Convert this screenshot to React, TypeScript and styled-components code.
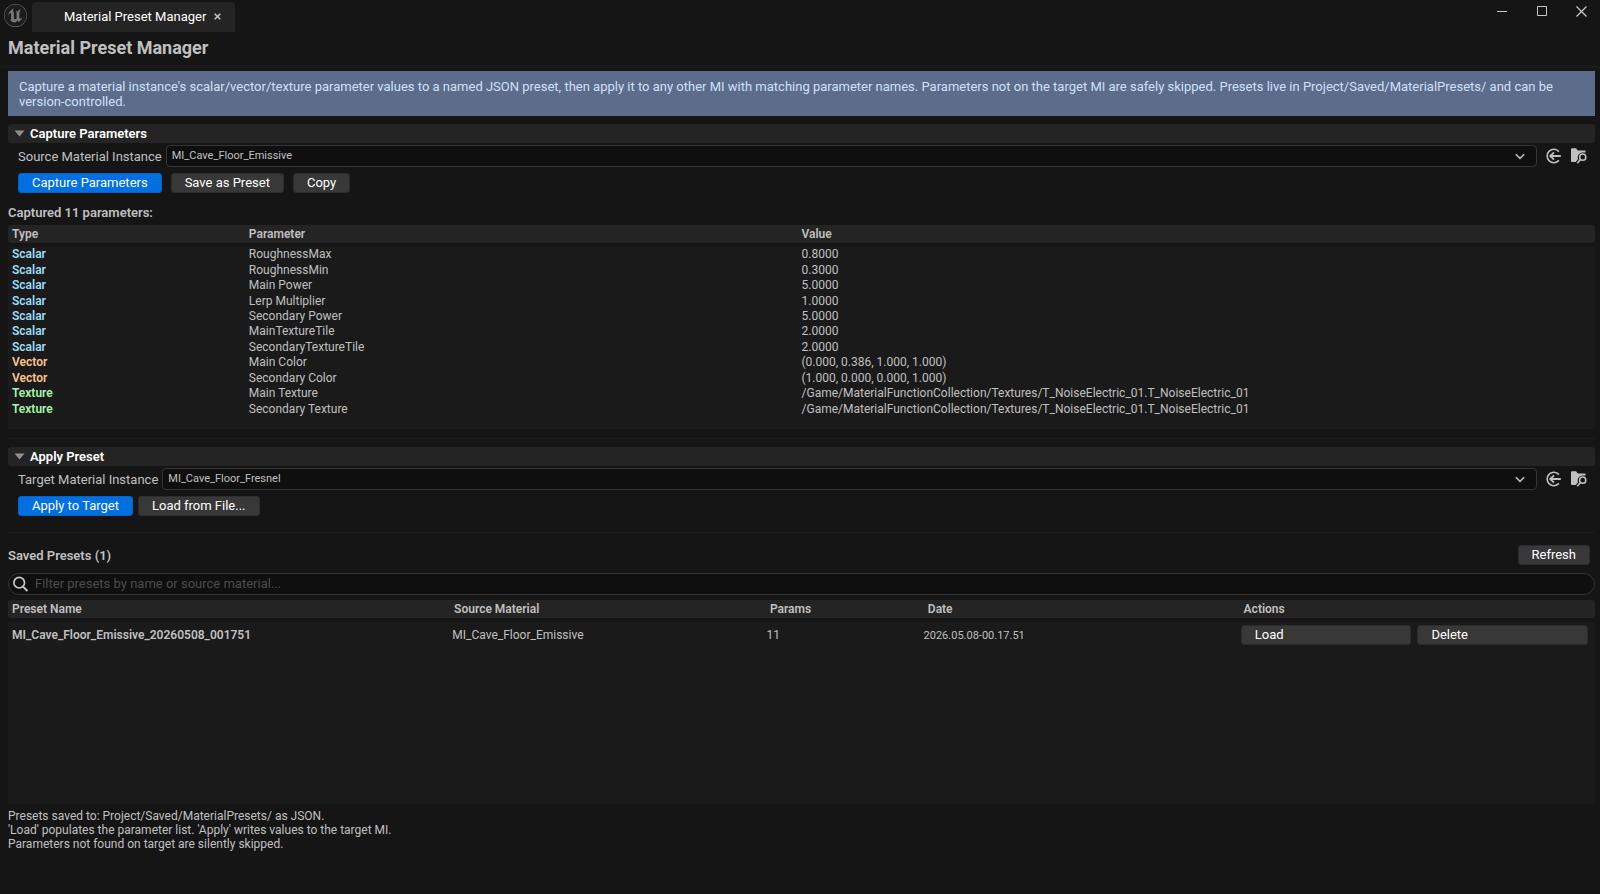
import React from "react";
import styled, { createGlobalStyle } from "styled-components";
import { SiUnrealengine } from "react-icons/si";

const GlobalStyle = createGlobalStyle`
  *, *::before, *::after { box-sizing: border-box; }
  body {
    margin: 0;
    background: #151515;
    color: #c0c0c0;
    font-family: Roboto, "Liberation Sans", sans-serif;
    font-size: 13px;
    line-height: 15px;
  }
  button, input, select { font: inherit; color: inherit; margin: 0; }
`;

const Window = styled.div`
  display: flex;
  flex-direction: column;
  min-height: 100vh;
`;

const TitleBar = styled.header`
  display: flex;
  align-items: flex-start;
  height: 32px;
`;

const Logo = styled.span`
  display: flex;
  margin: 4px 5px 0 4px;
  border-radius: 50%;
  background: #1c1c1c;
  color: #777;
`;

const Tab = styled.div`
  display: flex;
  align-items: center;
  width: 203px;
  height: 30px;
  margin-top: 2px;
  padding: 0 11px 2px 32px;
  border-radius: 4px 4px 0 0;
  background: #242424;
  color: #fff;
`;

const PlainButton = styled.button`
  display: inline-flex;
  align-items: center;
  justify-content: center;
  padding: 0;
  border: 0;
  background: none;
  color: inherit;
  white-space: nowrap;
`;

const TabClose = styled(PlainButton)`
  width: 14px;
  height: 14px;
  margin-left: auto;
  color: #c0c0c0;
`;

const WindowControls = styled.div`
  display: flex;
  margin-left: auto;
`;

const WindowButton = styled(PlainButton)`
  width: 40px;
  height: 22px;
  color: #c8c8c8;

  &:last-child { width: 38px; }
`;

const Main = styled.main`
  display: flex;
  flex-direction: column;
  padding: 0 5px 0 8px;
`;

const Title = styled.h1`
  margin: 0 -5px 0 -8px;
  padding: 4px 8px 5px;
  border-bottom: 3px solid #191919;
  font-size: 18px;
  line-height: 24px;
  font-weight: 700;
`;

const Banner = styled.p`
  margin: 3px 0 8px;
  padding: 8px 11px 7px;
  background: #5b6d8b;
  color: #cfe0fb;
`;

const SectionHeader = styled.h2`
  display: flex;
  margin: 0;
  height: 19px;
  border-radius: 3px;
  background: #242424;
  color: #fff;
  font-size: 13px;
  font-weight: 600;
`;

const SectionToggle = styled(PlainButton)`
  flex: 1;
  justify-content: flex-start;
  gap: 5px;
  padding: 0 0 1px 6px;
`;

const FieldRow = styled.div`
  display: flex;
  align-items: center;
  gap: 4px;
  margin-top: 2px;
  padding: 0 8px 0 10px;
`;

const SelectBox = styled.div`
  display: grid;
  flex: 1;
  align-items: center;

  > * { grid-area: 1 / 1; }
  > svg { justify-self: end; margin-right: 12px; pointer-events: none; }
`;

const Select = styled.select`
  appearance: none;
  width: 100%;
  height: 22px;
  padding: 0 32px 2px 5px;
  border: 1px solid #353535;
  border-radius: 4px;
  background: #0f0f0f;
  color: #c0c0c0;
  font-size: 11px;
`;

const AssetActions = styled.div`
  display: flex;
  gap: 9px;
  margin-left: 5px;
`;

const IconButton = styled(PlainButton)`
  width: 16px;
  height: 16px;
  color: #c0c0c0;
`;

const ButtonRow = styled.div<{ $gap: number }>`
  display: flex;
  gap: ${(p) => p.$gap}px;
  margin-top: 6px;
  padding-left: 10px;
`;

const Button = styled.button<{ $primary?: boolean; $start?: boolean }>`
  height: 20px;
  padding: 0 13px 1px;
  border: 1px solid ${(p) => (p.$primary ? "#0064c8" : "#2c2c2c")};
  border-radius: 3px;
  background: ${(p) => (p.$primary ? "#0070e0" : "#383838")};
  color: #fff;
  line-height: 15px;
  text-align: ${(p) => (p.$start ? "left" : "center")};
  white-space: nowrap;
`;

const ListTitle = styled.h2`
  margin: 0;
  font-size: 13px;
  line-height: 15px;
  font-weight: 600;
`;

const CapturedTitle = styled(ListTitle)`
  margin: 12px 0 5px;
`;

const Table = styled.table`
  display: block;
  font-size: 12px;
  text-align: left;
`;

const Head = styled.thead`
  display: block;
  margin-bottom: 4px;
  border-radius: 3px;
  background: #242424;
`;

const Body = styled.tbody`
  display: block;
  min-height: 182px;
  background: #1a1a1a;
`;

const ParamHeadRow = styled.tr`
  display: grid;
  grid-template-columns: 15fr 35fr 50fr;
  align-items: center;
  height: 18px;
  padding: 0 4px;
`;

const ParamRow = styled(ParamHeadRow)`
  height: auto;
`;

const ParamBody = styled(Body)`
  display: grid;
  align-content: start;
  grid-template-rows: repeat(11, 1fr);
  height: 182px;
  padding-bottom: 12px;
`;

const PresetHeadRow = styled.tr`
  display: grid;
  grid-template-columns: 28fr 20fr 10fr 20fr 22fr;
  align-items: center;
  height: 18px;
  padding: 0 4px;
`;

const PresetRow = styled.tr`
  display: grid;
  grid-template-columns: 440fr 314fr 157fr 317fr 347fr;
  align-items: center;
  height: 26px;
  padding: 0 7px 0 4px;
`;

const HeadCell = styled.th`
  padding: 0;
  font-weight: 600;
`;

const Cell = styled.td<{ $color?: string; $bold?: boolean; $small?: boolean }>`
  padding: 0;
  color: ${(p) => p.$color ?? "#c0c0c0"};
  font-weight: ${(p) => (p.$bold ? 600 : 400)};
  font-size: ${(p) => (p.$small ? 11 : 12)}px;
`;

const ActionsCell = styled.td`
  display: grid;
  grid-template-columns: 1fr 1fr;
  gap: 6px;
  padding: 0;
  font-size: 13px;
`;

const Divider = styled.hr<{ $above: number; $below: number }>`
  width: 100%;
  height: 1px;
  margin: ${(p) => p.$above}px 0 ${(p) => p.$below}px;
  border: 0;
  background: #1c1c1c;
`;

const SavedBar = styled.div`
  display: flex;
  align-items: center;
  justify-content: space-between;
  padding-right: 5px;
`;

const SearchField = styled.label`
  display: flex;
  align-items: center;
  gap: 6px;
  height: 22px;
  margin: 8px 0 5px;
  padding: 0 10px 0 4px;
  border: 1px solid #353535;
  border-radius: 11px;
  background: #0f0f0f;
`;

const SearchInput = styled.input`
  flex: 1;
  min-width: 0;
  height: 18px;
  padding: 0 0 2px;
  border: 0;
  outline: 0;
  background: none;

  &::placeholder { color: #4c4c4c; opacity: 1; }
`;

const Footnote = styled.p`
  margin: 5px 0 0;
  font-size: 12px;
  line-height: 14px;
`;

const typeColors: Record<string, string> = {
  Scalar: "#9addf8",
  Vector: "#ffc48c",
  Texture: "#a8f5a8",
};

const noise = "/Game/MaterialFunctionCollection/Textures/T_NoiseElectric_01.T_NoiseElectric_01";

const parameters: [string, string, string][] = [
  ["Scalar", "RoughnessMax", "0.8000"],
  ["Scalar", "RoughnessMin", "0.3000"],
  ["Scalar", "Main Power", "5.0000"],
  ["Scalar", "Lerp Multiplier", "1.0000"],
  ["Scalar", "Secondary Power", "5.0000"],
  ["Scalar", "MainTextureTile", "2.0000"],
  ["Scalar", "SecondaryTextureTile", "2.0000"],
  ["Vector", "Main Color", "(0.000, 0.386, 1.000, 1.000)"],
  ["Vector", "Secondary Color", "(1.000, 0.000, 0.000, 1.000)"],
  ["Texture", "Main Texture", noise],
  ["Texture", "Secondary Texture", noise],
];

const Triangle = () => (
  <svg width="11" height="7" viewBox="0 0 11 7" aria-hidden="true">
    <path d="M0.5 0.5h10L5.5 6.5z" fill="#8f8f8f" />
  </svg>
);

const Chevron = () => (
  <svg width="10" height="7" viewBox="0 0 10 7" fill="none" stroke="#c0c0c0" strokeWidth="1.5" aria-hidden="true">
    <path d="M0.8 1.2L5 5.4L9.2 1.2" />
  </svg>
);

const UseSelectedIcon = () => (
  <svg width="16" height="16" viewBox="0 0 16 16" fill="none" stroke="currentColor" strokeWidth="1.6" aria-hidden="true">
    <path d="M12.9 3.6A6.7 6.7 0 1 0 12.9 12.4" />
    <path d="M14.8 8H4.2" strokeWidth="2" />
    <path d="M8 4.4L4.2 8L8 11.6" strokeWidth="1.8" />
  </svg>
);

const BrowseIcon = () => (
  <svg width="16" height="16" viewBox="0 0 16 16" fill="none" aria-hidden="true">
    <path d="M0 1.3Q0 0.3 1 0.3H5L6.8 2.5H14.5V4.4H11.2A5 5 0 0 0 7 11.2L4.8 14H1Q0 14 0 13z" fill="currentColor" />
    <circle cx="11.7" cy="9.2" r="3.1" stroke="currentColor" strokeWidth="1.5" />
    <path d="M9.4 11.6L6.2 15.2" stroke="currentColor" strokeWidth="1.6" />
  </svg>
);

const SearchIcon = () => (
  <svg width="16" height="16" viewBox="0 0 16 16" fill="none" stroke="#c8c8c8" aria-hidden="true">
    <circle cx="6.2" cy="6.7" r="5.3" strokeWidth="1.7" />
    <path d="M10 10.6L14.4 15" strokeWidth="2" />
  </svg>
);

function MaterialField({ id, label, value }: { id: string; label: string; value: string }) {
  return (
    <FieldRow>
      <label htmlFor={id}>{label}</label>
      <SelectBox>
        <Select id={id} defaultValue={value}>
          <option>{value}</option>
        </Select>
        <Chevron />
      </SelectBox>
      <AssetActions>
        <IconButton aria-label="Use selected asset"><UseSelectedIcon /></IconButton>
        <IconButton aria-label="Browse to asset"><BrowseIcon /></IconButton>
      </AssetActions>
    </FieldRow>
  );
}

export default function App() {
  return (
    <Window>
      <GlobalStyle />
      <TitleBar>
        <Logo><SiUnrealengine size={23} aria-hidden="true" /></Logo>
        <Tab>
          <PlainButton>Material Preset Manager</PlainButton>
          <TabClose aria-label="Close tab">
            <svg width="7" height="7" viewBox="0 0 7 7" stroke="currentColor" strokeWidth="1.6">
              <path d="M0.7 0.7L6.3 6.3M6.3 0.7L0.7 6.3" />
            </svg>
          </TabClose>
        </Tab>
        <WindowControls>
          <WindowButton aria-label="Minimize">
            <svg width="10" height="10" viewBox="0 0 10 10"><path d="M0 5.5H10" stroke="currentColor" strokeWidth="1" /></svg>
          </WindowButton>
          <WindowButton aria-label="Maximize">
            <svg width="10" height="10" viewBox="0 0 10 10"><path d="M0.5 0.5H9.5V9.5H0.5z" fill="none" stroke="currentColor" /></svg>
          </WindowButton>
          <WindowButton aria-label="Close">
            <svg width="11" height="11" viewBox="0 0 11 11"><path d="M0.5 0.5L10.5 10.5M10.5 0.5L0.5 10.5" stroke="currentColor" strokeWidth="1.3" /></svg>
          </WindowButton>
        </WindowControls>
      </TitleBar>

      <Main>
        <Title>Material Preset Manager</Title>
        <Banner>
          Capture a material instance's scalar/vector/texture parameter values to a named JSON preset, then apply it to
          any other MI with matching parameter names. Parameters not on the target MI are safely skipped. Presets live
          in Project/Saved/MaterialPresets/ and can be version-controlled.
        </Banner>

        <SectionHeader>
          <SectionToggle aria-expanded="true"><Triangle />Capture Parameters</SectionToggle>
        </SectionHeader>
        <MaterialField id="source" label="Source Material Instance" value="MI_Cave_Floor_Emissive" />
        <ButtonRow $gap={9}>
          <Button $primary>Capture Parameters</Button>
          <Button>Save as Preset</Button>
          <Button>Copy</Button>
        </ButtonRow>

        <CapturedTitle>Captured 11 parameters:</CapturedTitle>
        <Table>
          <Head>
            <ParamHeadRow>
              <HeadCell>Type</HeadCell>
              <HeadCell>Parameter</HeadCell>
              <HeadCell>Value</HeadCell>
            </ParamHeadRow>
          </Head>
          <ParamBody>
            {parameters.map(([type, name, value]) => (
              <ParamRow key={name}>
                <Cell $bold $color={typeColors[type]}>{type}</Cell>
                <Cell>{name}</Cell>
                <Cell>{value}</Cell>
              </ParamRow>
            ))}
          </ParamBody>
        </Table>

        <Divider $above={9} $below={8} />
        <SectionHeader>
          <SectionToggle aria-expanded="true"><Triangle />Apply Preset</SectionToggle>
        </SectionHeader>
        <MaterialField id="target" label="Target Material Instance" value="MI_Cave_Floor_Fresnel" />
        <ButtonRow $gap={5}>
          <Button $primary>Apply to Target</Button>
          <Button>Load from File...</Button>
        </ButtonRow>

        <Divider $above={16} $below={12} />
        <SavedBar>
          <ListTitle>Saved Presets (1)</ListTitle>
          <Button>Refresh</Button>
        </SavedBar>
        <SearchField>
          <SearchIcon />
          <SearchInput type="text" aria-label="Filter presets" placeholder="Filter presets by name or source material..." />
        </SearchField>
        <Table>
          <Head>
            <PresetHeadRow>
              <HeadCell>Preset Name</HeadCell>
              <HeadCell>Source Material</HeadCell>
              <HeadCell>Params</HeadCell>
              <HeadCell>Date</HeadCell>
              <HeadCell>Actions</HeadCell>
            </PresetHeadRow>
          </Head>
          <Body>
            <PresetRow>
              <Cell $bold>MI_Cave_Floor_Emissive_20260508_001751</Cell>
              <Cell>MI_Cave_Floor_Emissive</Cell>
              <Cell>11</Cell>
              <Cell $small>2026.05.08-00.17.51</Cell>
              <ActionsCell>
                <Button $start>Load</Button>
                <Button $start>Delete</Button>
              </ActionsCell>
            </PresetRow>
          </Body>
        </Table>
        <Footnote>
          Presets saved to: Project/Saved/MaterialPresets/ as JSON.<br />
          'Load' populates the parameter list. 'Apply' writes values to the target MI.<br />
          Parameters not found on target are silently skipped.
        </Footnote>
      </Main>
    </Window>
  );
}
